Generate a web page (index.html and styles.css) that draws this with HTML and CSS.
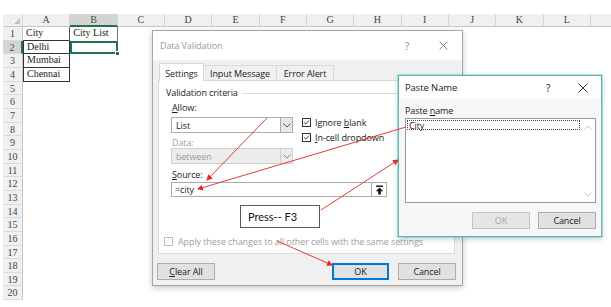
FILE: index.html
```html
<!DOCTYPE html>
<html>
<head>
<meta charset="utf-8">
<link rel="stylesheet" href="styles.css">
</head>
<body>
<div class="sheet">
  <div class="corner"><span class="tri"></span></div>
  <div class="ch">A</div><div class="ch sel">B</div><div class="ch">C</div><div class="ch">D</div>
  <div class="ch">E</div><div class="ch">F</div><div class="ch">G</div><div class="ch">H</div>
  <div class="ch">I</div><div class="ch">J</div><div class="ch">K</div><div class="ch">L</div>
  <div class="ch fill"></div>

  <div class="rh">1</div><div class="c a1">City</div><div class="c b1">City List</div>
  <div class="rh sel">2</div><div class="c a">Delhi</div><div class="c b2"><span class="handle"></span></div>
  <div class="rh">3</div><div class="c a">Mumbai</div>
  <div class="rh">4</div><div class="c a">Chennai</div>
  <div class="rh">5</div><div class="rh">6</div><div class="rh">7</div><div class="rh">8</div>
  <div class="rh">9</div><div class="rh">10</div><div class="rh">11</div><div class="rh">12</div>
  <div class="rh">13</div><div class="rh">14</div><div class="rh">15</div><div class="rh">16</div>
  <div class="rh">17</div><div class="rh">18</div><div class="rh">19</div><div class="rh">20</div>
</div>

<div class="dv">
  <div class="dv-title">
    <span class="t">Data Validation</span>
    <span class="help">?</span>
    <span class="close"><svg width="9" height="9" viewBox="0 0 9 9"><path d="M0.5 0.5L8.5 8.5M8.5 0.5L0.5 8.5" stroke="#8a8a8a" stroke-width="1"/></svg></span>
  </div>
  <div class="tabs">
    <span class="tab active">Settings</span>
    <span class="tab w2">Input Message</span>
    <span class="tab w3">Error Alert</span>
  </div>
  <div class="panel">
    <div class="legend"><span>Validation criteria</span></div>
    <div class="crit">
      <div class="lcol">
        <div class="lbl"><u>A</u>llow:</div>
        <div class="combo"><span class="val">List</span><span class="dd"><svg width="8" height="5" viewBox="0 0 8 5"><path d="M0.5 0.5L4 4L7.5 0.5" fill="none" stroke="#555" stroke-width="1"/></svg></span></div>
        <div class="lbl dis data">Data:</div>
        <div class="combo off"><span class="val">between</span><span class="dd"><svg width="8" height="5" viewBox="0 0 8 5"><path d="M0.5 0.5L4 4L7.5 0.5" fill="none" stroke="#888" stroke-width="1"/></svg></span></div>
      </div>
      <div class="rcol">
        <div class="chk"><span class="box"><svg width="9" height="9" viewBox="0 0 9 9"><path d="M1.5 4.5L3.6 6.6L7.6 2" fill="none" stroke="#222" stroke-width="1.1"/></svg></span><span>Ignore <u>b</u>lank</span></div>
        <div class="chk"><span class="box"><svg width="9" height="9" viewBox="0 0 9 9"><path d="M1.5 4.5L3.6 6.6L7.6 2" fill="none" stroke="#222" stroke-width="1.1"/></svg></span><span><u>I</u>n-cell dropdown</span></div>
      </div>
    </div>
    <div class="lbl src-lbl"><u>S</u>ource:</div>
    <div class="src"><span class="val">=city</span><span class="up"><svg width="9" height="10" viewBox="0 0 9 10"><rect x="1" y="0.5" width="7" height="1.4" fill="#111"/><path d="M4.5 2.6L8.2 6.3H5.8V9.5H3.2V6.3H0.8Z" fill="#111"/></svg></span></div>
    <div class="note">Press-- F3</div>
    <div class="chk apply"><span class="box empty"></span><span>Apply these changes to all other cells with the same settings</span></div>
  </div>
  <div class="btns">
    <span class="btn"><span><u>C</u>lear All</span></span>
    <span class="btn ok">OK</span>
    <span class="btn cancel">Cancel</span>
  </div>
</div>

<div class="pn">
  <div class="pn-title">
    <span class="t">Paste Name</span>
    <span class="help">?</span>
    <span class="close"><svg width="10" height="10" viewBox="0 0 10 10"><path d="M0.5 0.5L9.5 9.5M9.5 0.5L0.5 9.5" stroke="#333" stroke-width="1"/></svg></span>
  </div>
  <div class="pn-lbl">Paste <u>n</u>ame</div>
  <div class="list">
    <div class="items"><div class="item">City</div></div>
    <div class="sb">
      <svg width="8" height="5" viewBox="0 0 8 5"><path d="M0.5 4.5L4 1L7.5 4.5" fill="none" stroke="#c4c4c4" stroke-width="1"/></svg>
      <svg width="8" height="5" viewBox="0 0 8 5"><path d="M0.5 0.5L4 4L7.5 0.5" fill="none" stroke="#c4c4c4" stroke-width="1"/></svg>
    </div>
  </div>
  <div class="pn-btns">
    <span class="btn disabled">OK</span>
    <span class="btn">Cancel</span>
  </div>
</div>

<svg class="arrows" width="611" height="307" viewBox="0 0 611 307">
  <defs>
    <marker id="ah" markerWidth="6" markerHeight="6" refX="5" refY="3" orient="auto" markerUnits="userSpaceOnUse">
      <path d="M0 0L6 3L0 6Z" fill="#e22"/>
    </marker>
  </defs>
  <g stroke="#e63a3a" stroke-width="1" fill="none">
    <line x1="267" y1="118" x2="207" y2="180" marker-end="url(#ah)"/>
    <line x1="406" y1="127" x2="198" y2="189" marker-end="url(#ah)"/>
    <line x1="321" y1="210" x2="398" y2="160" marker-end="url(#ah)"/>
    <line x1="277" y1="241" x2="332" y2="265" marker-end="url(#ah)"/>
  </g>
</svg>
</body>
</html>
```
FILE: styles.css
```css
* { box-sizing: border-box; }
html, body { margin: 0; padding: 0; }
body {
  width: 611px;
  height: 307px;
  overflow: hidden;
  background: #fff;
  position: relative;
}

/* ---------- spreadsheet ---------- */
.sheet {
  display: grid;
  grid-template-columns: 20px repeat(12, 47.33px) 1fr;
  grid-template-rows: 13px;
  grid-auto-rows: 13.66px;
  padding: 14px 0 0 3px;
  font-family: "Liberation Serif", serif;
  font-size: 10px;
  color: #222;
}
.corner, .ch {
  background: #f0f0f0;
  border-right: 1px solid #d6d6d6;
  border-bottom: 1px solid #c6c6c6;
}
.corner { position: relative; }
.tri {
  position: absolute;
  right: 2px;
  bottom: 2px;
  width: 0; height: 0;
  border-left: 6px solid transparent;
  border-bottom: 6px solid #c2c2c2;
}
.ch {
  text-align: center;
  line-height: 12px;
  color: #444;
}
.ch.sel {
  background: #d4d4d4;
  border-bottom: 2px solid #217346;
  color: #2f5f45;
}
.ch.fill { border-right: none; }
.rh {
  grid-column: 1;
  background: #f0f0f0;
  border-right: 1px solid #c6c6c6;
  border-bottom: 1px solid #dadada;
  text-align: center;
  line-height: 13px;
  color: #444;
}
.rh.sel {
  background: #d4d4d4;
  border-right: 2px solid #217346;
  color: #2f5f45;
}
.c {
  padding-left: 3px;
  line-height: 12px;
  white-space: nowrap;
}
.a1 {
  border-right: 1px solid #555;
  border-bottom: 1px solid #333;
}
.a {
  border-left: 1px solid #333;
  border-right: 1px solid #333;
  border-bottom: 1px solid #333;
}
.b1 { border-right: 1px solid #777; }
.b2 {
  position: relative;
  border: 2px solid #217346;
}
.handle {
  position: absolute;
  right: -4px;
  bottom: -4px;
  width: 5px;
  height: 5px;
  background: #217346;
  border: 1px solid #fff;
}

/* ---------- shared dialog bits ---------- */
.dv, .pn {
  font-family: "Open Sans", "Noto Sans", sans-serif;
  font-size: 9px;
  letter-spacing: -0.1px;
  color: #1a1a1a;
}
u { text-decoration: underline; text-underline-offset: 1px; }
.btn {
  display: flex;
  align-items: center;
  justify-content: center;
  height: 17px;
  width: 58px;
  background: #e1e1e1;
  border: 1px solid #adadad;
}
.chk {
  display: flex;
  align-items: center;
  white-space: nowrap;
}
.box {
  width: 9px;
  height: 9px;
  border: 1px solid #333;
  background: #fff;
  margin-right: 4px;
  display: flex;
  align-items: center;
  justify-content: center;
  flex: none;
}
.box svg { display: block; }

/* ---------- Data Validation ---------- */
.dv {
  position: absolute;
  left: 152px;
  top: 30px;
  width: 311px;
  height: 256px;
  background: #f0f0f0;
  border: 1px solid #a6a6a6;
  box-shadow: 0 2px 6px rgba(0,0,0,0.22);
}
.dv-title {
  height: 29px;
  background: #fff;
  display: flex;
  align-items: center;
  padding-left: 7px;
  padding-right: 9px;
  color: #9a9a9a;
  font-size: 9px;
}
.dv-title .t { flex: 1; }
.dv-title .help { width: 12px; text-align: center; color: #8a8a8a; font-size: 10px; }
.dv-title .close { width: 20px; margin-left: 20px; display: flex; justify-content: center; }

.tabs {
  margin-top: 3px;
  height: 17px;
  padding-left: 6px;
  display: flex;
  align-items: flex-end;
}
.tab {
  height: 15px;
  width: 74px;
  display: flex;
  align-items: center;
  justify-content: center;
  background: #f0f0f0;
  border: 1px solid #d9d9d9;
  border-bottom: none;
  margin-right: -1px;
}
.tab.active {
  width: 45px;
  height: 18px;
  margin-bottom: -1px;
  background: #fff;
  position: relative;
  z-index: 1;
  padding-top: 1px;
}
.tab.w3 { width: 58px; }

.panel {
  margin-left: 5px;
  width: 297px;
  height: 174px;
  background: #fff;
  border: 1px solid #d9d9d9;
}
.legend {
  display: flex;
  align-items: center;
  padding: 6px 6px 0 7px;
  line-height: 12px;
}
.legend::after {
  content: "";
  flex: 1;
  border-top: 1px solid #dcdcdc;
  margin-left: 4px;
  margin-top: 1px;
}
.crit {
  display: flex;
  margin-top: 3px;
}
.lcol {
  margin-left: 12px;
  width: 122px;
}
.lbl {
  line-height: 12px;
  padding-left: 1px;
}
.lbl.dis, .dis { color: #a0a0a0; }
.lbl.data { line-height: 11px; margin-top: 4px; }
.combo {
  margin-top: 3px;
  height: 16px;
  border: 1px solid #acacac;
  display: flex;
  align-items: center;
  background: #fff;
}
.lbl.data + .combo { margin-top: 0; }
.combo .val { flex: 1; padding-left: 4px; }
.combo .dd {
  width: 12px;
  height: 100%;
  border-left: 1px solid #acacac;
  background: #e8e8e8;
  display: flex;
  align-items: center;
  justify-content: center;
}
.combo.off { background: #ececec; border-color: #cfcfcf; color: #9c9c9c; }
.combo.off .dd { background: #ececec; border-left-color: #cfcfcf; }
.rcol {
  margin-left: 9px;
  padding-top: 13px;
}
.rcol .chk { height: 15px; }

.src-lbl { margin-left: 12px; margin-top: 5px; }
.src {
  margin: 1px 0 0 12px;
  width: 216px;
  height: 15px;
  border: 1px solid #acacac;
  display: flex;
  align-items: center;
}
.src .val { flex: 1; padding-left: 3px; }
.src .up {
  width: 15px;
  height: 13px;
  border-left: 1px solid #acacac;
  display: flex;
  align-items: center;
  justify-content: center;
}
.note {
  margin: 8px 0 0 81px;
  width: 80px;
  height: 23px;
  border: 1px solid #5a5a5a;
  padding-left: 7px;
  display: flex;
  align-items: center;
  font-family: "Lato", "Liberation Sans", sans-serif;
  font-size: 11px;
  letter-spacing: 0;
  color: #111;
}
.apply {
  margin: 8px 0 0 5px;
  height: 11px;
  color: #a0a0a0;
}
.apply .box { border-color: #bcbcbc; margin-right: 5px; }

.btns {
  display: flex;
  margin-top: 9px;
  padding: 0 6px 0 4px;
}
.btns .ok {
  margin-left: auto;
  width: 57px;
  border-color: #0078d7;
  box-shadow: inset 0 0 0 1px #0078d7;
}
.btns .cancel { margin-left: 9px; }

/* ---------- Paste Name ---------- */
.pn {
  position: absolute;
  left: 398px;
  top: 75px;
  width: 204px;
  height: 162px;
  background: #f7f7f7;
  border: 1px solid #56b7b3;
  box-shadow: 0 0 0 1px rgba(86,183,179,0.35), 0 2px 6px rgba(0,0,0,0.2);
}
.pn-title {
  height: 23px;
  display: flex;
  align-items: center;
  padding-left: 6px;
  padding-right: 8px;
  background: #fff;
  font-size: 9.5px;
}
.pn-title .t { flex: 1; }
.pn-title .help { width: 12px; text-align: center; font-size: 10px; }
.pn-title .close { width: 20px; margin-left: 19px; display: flex; justify-content: center; }
.pn-lbl {
  margin: 6px 0 0 6px;
  line-height: 12px;
}
.list {
  margin: 1px 0 0 6px;
  width: 191px;
  height: 85px;
  background: #fff;
  border: 1px solid #9a9a9a;
  display: flex;
}
.items { flex: 1; padding: 1px 0 0 1px; }
.item {
  height: 10px;
  line-height: 9px;
  width: 173px;
  border: 1px dotted #444;
  padding-left: 1px;
}
.sb {
  width: 14px;
  display: flex;
  flex-direction: column;
  justify-content: space-between;
  align-items: center;
  padding: 6px 0 5px;
}
.sb svg { display: block; }
.pn-btns {
  display: flex;
  justify-content: flex-end;
  gap: 8px;
  margin-top: 9px;
  padding-right: 5px;
}
.btn.disabled { color: #a6a6a6; border-color: #c4c4c4; background: #e6e6e6; }

/* ---------- annotation arrows ---------- */
.arrows {
  position: absolute;
  left: 0;
  top: 0;
  pointer-events: none;
}
```
